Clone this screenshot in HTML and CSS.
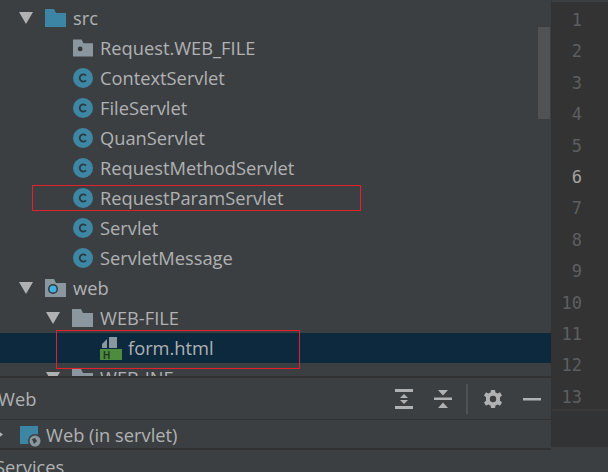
FILE: index.html
```html
<!DOCTYPE html>
<html lang="en">
<head>
<meta charset="utf-8">
<title>Project</title>
<link rel="stylesheet" href="styles.css">
</head>
<body>
<svg class="defs" width="0" height="0" aria-hidden="true">
  <defs>
    <symbol id="arrow" viewBox="0 0 14 12"><path d="M0 0H14L7 12Z" fill="#afb1b3"/></symbol>
    <symbol id="cls" viewBox="0 0 20 20">
      <circle cx="10" cy="10" r="10" fill="#3d87a5"/>
      <path d="M13 7.600A3.600 3.600 0 1 0 13 12.400" fill="none" stroke="#2b3a42" stroke-width="1.800"/>
    </symbol>
    <symbol id="folder" viewBox="0 0 21 18"><path d="M0 0H9L11 4H21V18H0Z" fill="#8b979f"/></symbol>
  </defs>
</svg>
<div class="window">
  <div class="left">
    <div class="tree">
      <div class="row d-src"><svg class="arrow"><use href="#arrow"/></svg><svg class="ico"><path d="M0 0H9L11 4H21V18H0Z" fill="#3c85a5"/></svg><span>src</span></div>
      <div class="row d-leaf"><svg class="ico-c" viewBox="0 0 21 18"><path d="M0 0H9L11 4H21V18H0Z" fill="#8b979f"/><circle cx="7.500" cy="10" r="2.500" fill="#33383b"/></svg><span>Request.WEB_FILE</span></div>
      <div class="row d-leaf"><svg class="ico-c"><use href="#cls"/></svg><span>ContextServlet</span></div>
      <div class="row d-leaf"><svg class="ico-c"><use href="#cls"/></svg><span>FileServlet</span></div>
      <div class="row d-leaf"><svg class="ico-c"><use href="#cls"/></svg><span>QuanServlet</span></div>
      <div class="row d-leaf"><svg class="ico-c"><use href="#cls"/></svg><span>RequestMethodServlet</span></div>
      <div class="row d-leaf"><svg class="ico-c"><use href="#cls"/></svg><span>RequestParamServlet</span></div>
      <div class="row d-leaf"><svg class="ico-c"><use href="#cls"/></svg><span>Servlet</span></div>
      <div class="row d-leaf"><svg class="ico-c"><use href="#cls"/></svg><span>ServletMessage</span></div>
      <div class="row d-src"><svg class="arrow"><use href="#arrow"/></svg><svg class="ico"><path d="M0 0H9L11 4H21V18H0Z" fill="#8b979f"/><circle cx="8" cy="10" r="5" fill="#33383b"/><circle cx="8" cy="10" r="3.500" fill="#3fb4e4"/></svg><span>web</span></div>
      <div class="row d-sub"><svg class="arrow"><use href="#arrow"/></svg><svg class="ico"><use href="#folder"/></svg><span>WEB-FILE</span></div>
      <div class="row d-file selected"><svg class="ico-h" viewBox="0 0 22 23"><path d="M2 11V7L7 2V11ZM9 0H17V11H9Z" fill="#8b979f"/><path d="M0 12H22V23H0Z" fill="#4d8b3f"/><text x="3" y="21.500" class="h-letter">H</text></svg><span>form.html</span></div>
      <div class="row d-sub"><svg class="arrow"><use href="#arrow"/></svg><svg class="ico"><use href="#folder"/></svg><span>WEB-INF</span></div>
    </div>
    <div class="toolbar">
      <span class="tool-title">Web</span>
      <svg class="tool tool-first" viewBox="0 0 18 20"><path d="M0 0H18V3H0ZM0 17H18V20H0ZM9 5L13 9H5ZM5 11H13L9 15Z" fill="#afb1b3"/></svg>
      <svg class="tool tool-second" viewBox="0 0 18 20"><path d="M0 8.500H18V11H0ZM4 1H14L9 6.500ZM9 13.500L14 19H4Z" fill="#afb1b3"/></svg>
      <i class="tool-sep"></i>
      <svg class="tool tool-gear" viewBox="0 0 18 20"><path d="M7 0H11L11.500 2.600L13.800 3.600L16 2.300L18 5.500L16 7.300V10.700L18 12.500L16 15.700L13.800 14.400L11.500 15.400L11 18H7L6.500 15.400L4.200 14.400L2 15.700L0 12.500L2 10.700V7.300L0 5.500L2 2.300L4.200 3.600L6.500 2.600Z" transform="translate(0 1)" fill="#afb1b3"/><circle cx="9" cy="10" r="3.200" fill="#3c3f41"/></svg>
      <svg class="tool tool-min" viewBox="0 0 18 20"><path d="M0 9H18V11.500H0Z" fill="#afb1b3"/></svg>
    </div>
    <div class="runrow">
      <svg class="mini" viewBox="0 0 4 6"><path d="M0 0L4 3L0 6Z" fill="#afb1b3"/></svg>
      <svg class="module" viewBox="0 0 22 22"><path d="M0 0H18V18H0Z" fill="#3c85a5"/><circle cx="15" cy="15" r="7" fill="#3c3f41"/><circle cx="15" cy="15" r="5.500" fill="#8b979f"/><path d="M12 13L15 12L17 15L14 18Z" fill="#3c3f41"/></svg>
      <span>Web (in servlet)</span>
    </div>
    <div class="services"><span>Services</span></div>
  </div>
  <div class="gutter">
    <div class="nums">
      <div>1</div><div>2</div><div>3</div><div>4</div><div>5</div><div class="cur">6</div><div>7</div><div>8</div><div>9</div><div>10</div><div>11</div><div>12</div><div>13</div>
    </div>
  </div>
  <div class="thumb"></div>
  <div class="mark mark-a"></div>
  <div class="mark mark-b"></div>
</div>
</body>
</html>
```
FILE: styles.css
```css
html, body {
  margin: 0;
  padding: 0;
  background: #3c3f41;
}
.defs {
  position: absolute;
}
.window {
  position: relative;
  width: 608px;
  height: 472px;
  display: flex;
  overflow: hidden;
  font-family: "Open Sans", "Noto Sans", sans-serif;
  font-size: 18.300px;
  color: #b0b2b4;
}
.left {
  width: 551px;
  flex: none;
  display: flex;
  flex-direction: column;
}
.tree {
  height: 376px;
  flex: none;
  padding-top: 3px;
  box-sizing: border-box;
  overflow: hidden;
}
.row {
  height: 30px;
  display: flex;
  align-items: center;
  white-space: nowrap;
}
.row span {
  padding-bottom: 2px;
}
.d-src { padding-left: 19px; }
.d-sub { padding-left: 46px; }
.d-leaf { padding-left: 73px; }
.d-file { padding-left: 100px; }
.selected { background: #0d293e; }
.arrow {
  width: 14px;
  height: 12px;
  margin-right: 12px;
  flex: none;
}
.ico {
  width: 21px;
  height: 18px;
  margin-right: 7px;
  flex: none;
}
.ico-c {
  width: 20px;
  height: 20px;
  margin-right: 7px;
  flex: none;
}
.ico-h {
  width: 22px;
  height: 23px;
  margin-right: 6px;
  flex: none;
}
.h-letter {
  font-family: "Liberation Sans", sans-serif;
  font-size: 10px;
  font-weight: 700;
  fill: #24381f;
}
.toolbar {
  height: 41px;
  flex: none;
  display: flex;
  align-items: center;
  border-top: 2px solid #323232;
  border-bottom: 1px solid #323232;
  box-sizing: content-box;
}
.tool-title {
  margin-left: -2px;
  width: 397px;
  flex: none;
}
.tool {
  width: 18px;
  height: 20px;
  flex: none;
}
.tool-second { margin-left: 21px; }
.tool-sep {
  width: 2px;
  height: 30px;
  margin-left: 14px;
  background: #505355;
  flex: none;
}
.tool-gear { margin-left: 16px; }
.tool-min { margin-left: 21px; }
.runrow {
  height: 28px;
  flex: none;
  display: flex;
  align-items: center;
  border-bottom: 2px solid #323232;
}
.mini {
  width: 3px;
  height: 5px;
  margin-right: 17px;
  flex: none;
}
.module {
  width: 22px;
  height: 22px;
  margin-right: 4px;
  margin-top: 5px;
  flex: none;
}
.services {
  margin-left: -5px;
  padding-top: 5px;
  line-height: 24px;
}
.gutter {
  width: 57px;
  height: 447px;
  flex: none;
  background: #313335;
  border-top: 2px solid #3c3f41;
  box-sizing: border-box;
  border-left: 1px solid #323232;
}
.nums {
  height: 409px;
  padding-top: 3px;
  box-sizing: border-box;
  border-bottom: 2px solid #3a3a3a;
  background: #333333;
  font-family: "DejaVu Sans Mono", monospace;
  font-size: 17px;
  line-height: 31.400px;
  text-align: right;
  padding-right: 26px;
  color: #5c5f61;
}
.cur { color: #a4a3a3; }
.thumb {
  position: absolute;
  left: 538px;
  top: 27px;
  width: 12px;
  height: 92px;
  background: #505253;
}
.mark {
  position: absolute;
  box-sizing: border-box;
  border: 1px solid #e4202c;
}
.mark-a {
  left: 32px;
  top: 185px;
  width: 329px;
  height: 26px;
}
.mark-b {
  left: 56px;
  top: 330px;
  width: 244px;
  height: 39px;
}
```
